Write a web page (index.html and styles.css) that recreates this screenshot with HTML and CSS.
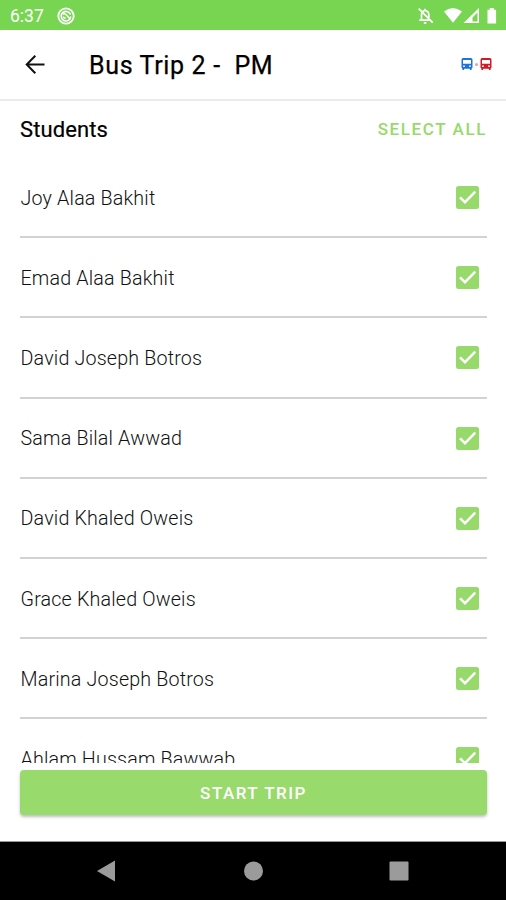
FILE: index.html
```html
<!DOCTYPE html>
<html lang="en">
<head>
<meta charset="utf-8">
<title>Bus Trip</title>
<link rel="stylesheet" href="styles.css">
</head>
<body>
<svg class="defs" width="0" height="0">
  <symbol id="check" viewBox="0 0 23 23">
    <rect width="23" height="23" rx="2.5" fill="#97da6b"/>
    <path d="M4 11.300l5 4.900L19.300 5.700" fill="none" stroke="#fff" stroke-width="2.500"/>
  </symbol>
  <symbol id="bus" viewBox="0 0 12 13">
    <path fill="currentColor" fill-rule="evenodd" d="M2.2 0h7.6Q11.5 0 11.5 1.8V9.6q0 .6-.9 .9v1.6h-1.700v-1.400H3.100v1.400H1.400v-1.600Q.5 10.200 .5 9.600V1.800Q.5 0 2.200 0zM2 2v3.800h8V2zM3 7.300a.9 .9 0 1 0 0 1.800a.9 .9 0 1 0 0-1.800zM9 7.300a.9 .9 0 1 0 0 1.800a.9 .9 0 1 0 0-1.800z"/>
  </symbol>
</svg>
<div class="screen">
  <div class="status">
    <span class="clock">6:37</span>
    <svg class="app-badge" width="18" height="18" viewBox="0 0 18 18" fill="none" stroke="#fff">
      <circle cx="9" cy="9" r="7.700" stroke-width="1.800"/>
      <path d="M12.500 12.500A4.800 4.800 0 1 1 13.500 7.500M13.800 9.500L12.500 12.500" stroke-width="1.700"/>
      <path d="M6 7q2-1 3.500 1l3.800 4.500M6 10l2.500 1.500" stroke-width="1.500"/>
    </svg>
    <span class="spacer"></span>
    <svg width="80" height="20" viewBox="0 0 80 20" fill="#fff">
      <g fill="none" stroke="#fff" stroke-width="1.700">
        <path d="M3.500 13.500V8.700Q3.500 5 7 4.300V2.700M7 4.300Q10.800 5 10.800 8.700v3.300M1.300 14.200h10.500M5.800 16.800h2.600"/>
        <path d="M.7 2.700l14 14"/>
      </g>
      <path d="M26 5.500Q34.800-1.700 44 5.500L35 16.700z"/>
      <path fill-rule="evenodd" d="M61 2v15H45.500zM59.500 6.500l-5 5v4h5z"/>
      <path d="M69.500 3.700h2.200V1.900h4.200v1.800h2.200V17.500h-8.600z"/>
    </svg>
  </div>
  <header class="appbar">
    <svg class="back" width="20" height="20" viewBox="0 0 20 20" fill="none" stroke="#111" stroke-width="2"><path d="M19.500 9.500H2M10.300 .8L1.700 9.500l8.600 8.700"/></svg>
    <h1>Bus Trip 2 -&nbsp; PM</h1>
    <div class="buses">
      <svg class="blue" width="12" height="13"><use href="#bus"/></svg>
      <i></i>
      <svg class="red" width="12" height="13"><use href="#bus"/></svg>
    </div>
  </header>
  <main>
    <div class="heading"><h2>Students</h2><span class="select">SELECT ALL</span></div>
    <ul class="list">
      <li><span>Joy Alaa Bakhit</span><svg class="box"><use href="#check"/></svg></li>
      <li><span>Emad Alaa Bakhit</span><svg class="box"><use href="#check"/></svg></li>
      <li><span>David Joseph Botros</span><svg class="box"><use href="#check"/></svg></li>
      <li><span>Sama Bilal Awwad</span><svg class="box"><use href="#check"/></svg></li>
      <li><span>David Khaled Oweis</span><svg class="box"><use href="#check"/></svg></li>
      <li><span>Grace Khaled Oweis</span><svg class="box"><use href="#check"/></svg></li>
      <li><span>Marina Joseph Botros</span><svg class="box"><use href="#check"/></svg></li>
      <li><span>Ahlam Hussam Bawwab</span><svg class="box"><use href="#check"/></svg></li>
    </ul>
  </main>
  <div class="action"><button>START TRIP</button></div>
  <nav>
    <svg width="506" height="58" viewBox="0 0 506 58" fill="#9b9b9b">
      <path d="M97 29L115 18.500v21z"/>
      <circle cx="253.500" cy="29" r="9.500"/>
      <rect x="389.500" y="19.500" width="19" height="19" rx="1"/>
    </svg>
  </nav>
</div>
</body>
</html>
```
FILE: styles.css
```css
* { box-sizing: border-box; }
body { margin: 0; font-family: Roboto, "Liberation Sans", sans-serif; background: #fff; }
.defs { display: block; }
.screen { width: 506px; height: 900px; display: flex; flex-direction: column; overflow: hidden; }
.status { height: 30px; flex: none; background: #78d552; display: flex; align-items: center; padding: 1px 8px 0 10px; color: #fff; }
.clock { font-size: 17.5px; line-height: 30px; }
.app-badge { margin-left: 13px; }
.spacer { flex: 1; }
.appbar { height: 71px; flex: none; border-bottom: 2px solid #ebebeb; display: flex; align-items: center; padding: 0 14px 0 25px; }
h1 { margin: 2px 0 0 44px; font-size: 25px; font-weight: 400; letter-spacing: 0.65px; color: #000; -webkit-text-stroke: 0.25px #000; flex: 1; white-space: nowrap; }
.buses { display: flex; align-items: center; gap: 2px; }
.buses i { width: 3px; height: 3px; border-radius: 50%; background: #eaa0a4; }
.blue { color: #1c73e0; }
.red { color: #d31923; }
main { height: 662px; flex: none; overflow: hidden; padding: 0 19px 0 20px; }
.heading { height: 56px; display: flex; justify-content: space-between; align-items: center; }
h2 { margin: 1px 0 0; font-size: 22px; font-weight: 400; letter-spacing: 0.1px; color: #000; -webkit-text-stroke: 0.2px #000; }
.select { font-size: 17px; font-weight: 500; letter-spacing: 1.6px; color: #97da6b; }
.list { margin: 0; padding: 1px 0 0; list-style: none; }
.list li { height: 80.2px; border-bottom: 2px solid #d2d2d2; display: flex; justify-content: space-between; align-items: center; padding: 1px 8px 0 0; font-size: 19.7px; font-weight: 300; letter-spacing: 0.17px; color: #111; }
.list span { padding: 1px 0 0 0.5px; }
.box { width: 23px; height: 23px; }
.action { height: 79px; flex: none; padding: 7px 19px 0 20px; }
button { display: block; width: 100%; height: 45px; border: 0; border-radius: 4px; background: #98da6b; color: #fff; font: 500 17px Roboto, "Liberation Sans", sans-serif; letter-spacing: 1.5px; box-shadow: 0 2px 3px rgba(0,0,0,.25); }
nav { height: 58px; flex: none; background: #000; box-shadow: 0 -1px 0 #999; }
nav svg { display: block; }
```
